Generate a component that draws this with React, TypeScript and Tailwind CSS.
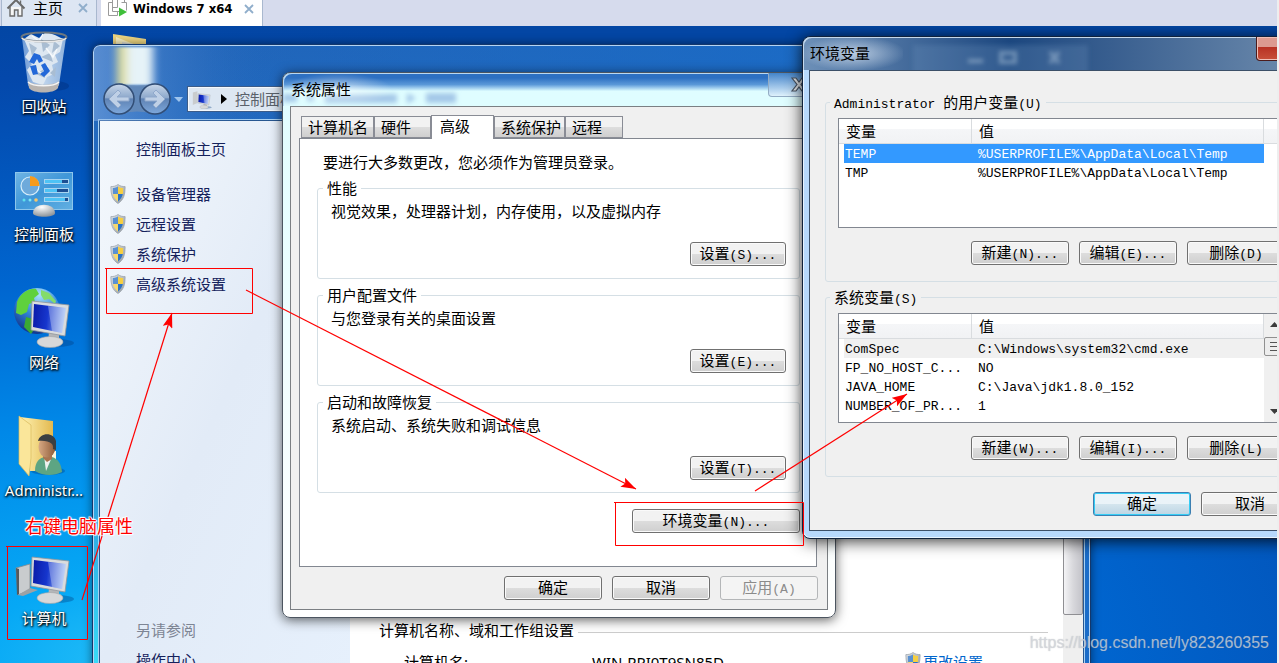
import type { ReactNode } from "react";

const UI = "font-['Noto_Sans','Noto_Sans_CJK_SC',sans-serif]";
const MONO = "font-['Liberation_Mono',monospace] text-[13px]";

const USER_VARS = [
  { name: "TEMP", value: "%USERPROFILE%\\AppData\\Local\\Temp" },
  { name: "TMP", value: "%USERPROFILE%\\AppData\\Local\\Temp" },
];

const SYSTEM_VARS = [
  { name: "ComSpec", value: "C:\\Windows\\system32\\cmd.exe" },
  { name: "FP_NO_HOST_C...", value: "NO" },
  { name: "JAVA_HOME", value: "C:\\Java\\jdk1.8.0_152" },
  { name: "NUMBER_OF_PR...", value: "1" },
];

/* ---------- icons ---------- */

function HomeIcon() {
  return (
    <svg width="20" height="20" viewBox="0 0 20 20" fill="none" stroke="#6a6a6a" strokeWidth="1.4">
      <path d="M4 9v9h4.500v-6h3.500v6H16V9" fill="#f6f6f6" />
      <path d="M1.500 10.500 10 2l8.500 8.500" strokeWidth="2" />
      <path d="M14.500 2.500v4" />
    </svg>
  );
}

function VmIcon() {
  return (
    <svg width="22" height="22" viewBox="0 0 22 22" fill="none" stroke="#9a9a9a" strokeWidth="1">
      <path d="M5.500 0v13.500h7M5.500 4.500h-4v13h9v-4M10.500 0v9.500h-5M17.500 0v4.500h-3" />
      <path d="M19.500 4.500v8M19.500 4.500H15" />
      <path d="M12 9.500v9l8-4.500z" fill="#3fbf3a" stroke="none" />
    </svg>
  );
}

function CloseMark() {
  return (
    <svg width="10" height="10" viewBox="0 0 10 10" stroke="#90aecb" strokeWidth="1.800">
      <path d="M1 1l8 8M9 1 1 9" />
    </svg>
  );
}

function Shield() {
  return (
    <svg width="16" height="20" viewBox="0 0 18 20" preserveAspectRatio="none" className="shrink-0">
      <defs>
        <clipPath id="shieldInner">
          <path d="M9 2.500c2 1.200 4 1.500 6 1.500 0 6-1 10-6 13.500C4 14 3 10 3 4c2 0 4-.3 6-1.500z" />
        </clipPath>
        <linearGradient id="shieldRim" x2="1" y2="1">
          <stop stopColor="#dfe3e8" />
          <stop offset="1" stopColor="#8f979f" />
        </linearGradient>
      </defs>
      <path d="M9 .5C11.500 2.200 14 2.600 17 2.600 17 10.500 15.500 16 9 19.500 2.500 16 1 10.500 1 2.600 4 2.600 6.500 2.200 9 .5z" fill="url(#shieldRim)" stroke="#9aa2aa" strokeWidth=".8" />
      <g clipPath="url(#shieldInner)">
        <path d="M0 0h9v10H0z" fill="#2c72c4" />
        <path d="M9 0h9v10H9z" fill="#f6cf42" />
        <path d="M0 10h9v10H0z" fill="#f6cf42" />
        <path d="M9 10h9v10H9z" fill="#2c72c4" />
        <path d="M0 0h9v20H0z" fill="#fff" opacity=".22" />
      </g>
    </svg>
  );
}

function BinIcon() {
  return (
    <svg width="64" height="64" viewBox="0 0 64 64">
      <defs>
        <linearGradient id="bin" x1="0" x2="1">
          <stop offset="0" stopColor="#6d9ad6" />
          <stop offset=".5" stopColor="#bdd3ec" />
          <stop offset="1" stopColor="#8fb2dc" />
        </linearGradient>
      </defs>
      <ellipse cx="42" cy="56" rx="15" ry="5" fill="#002c78" opacity=".4" />
      <path d="M10 8l6 47c2 6 28 6 31 0l7-47z" fill="url(#bin)" />
      <path d="M12 9l7-5 8 4 7-6 9 3 8 4-3 13-5 3 3 7-6 3 2 9-7 3-4 8-10-3-6-12 5-6-7-7 4-6z" fill="#dde7f1" />
      <path d="M17 13l8 5-5 8zM29 9l9 6-7 7zM42 11l6 5-8 7zM29 27l9-4 3 9zM24 44l8-5 1 9zM38 43l6-6-1 10z" fill="#a9bdd2" />
      <path d="M20 6l7 5 4-7M34 18l7 9 4-8M24 39l6 5 6-8" fill="none" stroke="#f6f9fc" strokeWidth="1.500" />
      <path d="M17 32l5-9 6 2 3 6-4 2-2-4-3 5zM18 36l6-1 2 9-5 1zM29 35l4-2 5 8-6 6-4-3 4-3z" fill="#2368d8" />
      <path d="M16 51c5 5 26 5 31 0l-1 7c-4 6-25 6-29 0z" fill="#b9b4b0" />
      <path d="M16 52c5 5 26 5 31 0" fill="none" stroke="#f4f4f4" strokeWidth="1.500" />
      <ellipse cx="32" cy="7" rx="22.500" ry="4.500" fill="none" stroke="#6e7880" strokeWidth="2" />
      <path d="M10 8c2 5 42 5 44 0" fill="none" stroke="#e8e8e8" strokeWidth="1.500" />
    </svg>
  );
}

function ControlPanelIcon() {
  return (
    <svg width="64" height="64" viewBox="0 0 64 64">
      <defs>
        <linearGradient id="cp" x1="0" y1="0" x2="1" y2="1">
          <stop offset="0" stopColor="#6fb4e4" />
          <stop offset=".5" stopColor="#3f97d8" />
          <stop offset="1" stopColor="#62b0e2" />
        </linearGradient>
        <radialGradient id="cpBase" cx=".4" cy=".2" r=".8">
          <stop offset="0" stopColor="#fff" />
          <stop offset="1" stopColor="#8d949a" />
        </radialGradient>
      </defs>
      <rect x="3.500" y="14.500" width="57" height="37" fill="url(#cp)" stroke="#8cc6ec" />
      <circle cx="18" cy="28" r="9" fill="#6eaadb" stroke="#d8eefb" strokeWidth="1.200" />
      <path d="M18 18v10h9.500A9.500 9.500 0 0 0 18 18z" fill="#f59b1d" />
      <g fill="#1c4f94" stroke="#a8d4f0">
        <rect x="32.500" y="21.500" width="24" height="4" />
        <rect x="32.500" y="30.500" width="24" height="4" />
        <rect x="32.500" y="39.500" width="24" height="4" />
      </g>
      <path d="M33 22h17v3H33zM33 31h12v3H33zM33 40h20v3H33z" fill="#4ec3f5" />
      <circle cx="12" cy="42" r="1.500" fill="#5fe0ec" />
      <circle cx="18" cy="42" r="1.500" fill="#7de8f5" />
      <circle cx="24" cy="42" r="1.800" fill="#f6c66c" />
      <path d="M21 55c0-11 22-11 22 0 0 5-22 5-22 0z" fill="url(#cpBase)" />
    </svg>
  );
}

function Monitor() {
  return (
    <g>
      <ellipse cx="44" cy="57" rx="18" ry="4" fill="#00397a" opacity=".35" />
      <path d="M37 46l10 2v8H36z" fill="#b4b6b8" />
      <ellipse cx="38" cy="56" rx="13" ry="5.500" fill="#d7d8d9" stroke="#a2a4a6" strokeWidth=".6" />
      <path d="M20 15l37 4-4 31-34-6z" fill="#dadcdd" stroke="#92969a" strokeWidth=".8" />
      <path d="M22 18l32 4-4 25-29-6z" fill="url(#screen)" />
      <path d="M36 20l18 2-4 25-10-2z" fill="#fff" opacity=".3" />
    </g>
  );
}

function ScreenDefs() {
  return (
    <defs>
      <linearGradient id="screen" x1="0" y1=".2" x2="1" y2=".3">
        <stop offset="0" stopColor="#0a1ba8" />
        <stop offset=".45" stopColor="#1636cd" />
        <stop offset="1" stopColor="#a8c4f4" />
      </linearGradient>
      <radialGradient id="globe" cx=".55" cy=".15" r=".9">
        <stop offset="0" stopColor="#a9e2fa" />
        <stop offset=".5" stopColor="#3284d8" />
        <stop offset="1" stopColor="#0e2b83" />
      </radialGradient>
    </defs>
  );
}

function NetworkIcon() {
  return (
    <svg width="64" height="64" viewBox="0 0 64 64">
      <ScreenDefs />
      <circle cx="25" cy="25" r="23" fill="url(#globe)" />
      <path d="M5 16C9 6 18 2 24 3l3 5-5 4 1 4-6 2-2 8-6 3-5-2z" fill="#5fd13c" />
      <path d="M29 4l8 3 7 8-1 3-6-5-5 1-3-5z" fill="#84dc6a" />
      <path d="M14 31l7 2 3 8-5 7-7-7z" fill="#3aa834" />
      <Monitor />
    </svg>
  );
}

function ComputerIcon() {
  return (
    <svg width="64" height="64" viewBox="0 0 64 64">
      <ScreenDefs />
      <path d="M4 26l14-4v26L6 53z" fill="#c9ccce" stroke="#85898c" strokeWidth=".8" />
      <path d="M4 26l3 1v25l-2 1z" fill="#55595c" />
      <path d="M18 46l8 2-15 6-5-1z" fill="#9da1a4" />
      <Monitor />
    </svg>
  );
}

function UserFolderIcon() {
  return (
    <svg width="64" height="64" viewBox="0 0 64 64">
      <defs>
        <linearGradient id="folder" x1="0" x2="1">
          <stop offset="0" stopColor="#fff3b4" />
          <stop offset="1" stopColor="#e3b94f" />
        </linearGradient>
        <linearGradient id="face" x1="0" x2="1">
          <stop offset="0" stopColor="#d8aa84" />
          <stop offset="1" stopColor="#8d5a38" />
        </linearGradient>
      </defs>
      <ellipse cx="36" cy="57" rx="17" ry="4" fill="#00397a" opacity=".35" />
      <path d="M8 3l33 4v50H18z" fill="url(#folder)" />
      <path d="M40 37h4v14h-4z" fill="#fbf7df" />
      <path d="M7 2l12 9v33l-2 18L7 50z" fill="#fae69a" stroke="#d9b95a" strokeWidth=".7" />
      <path d="M23 57c0-9 4-13 10-14h7c6 2 9 6 10 15-8 4-19 4-27-1z" fill="#5da583" />
      <path d="M32 42l2 15 6-14z" fill="#eef1ef" />
      <path d="M31 38h9v7l-5 3-4-4z" fill="#a87450" />
      <ellipse cx="35" cy="33" rx="8.500" ry="10.500" fill="url(#face)" />
      <path d="M26 27c2-9 16-9 18 0v9l-3-1c1-5-3-9-15-8z" fill="#3b3f42" />
    </svg>
  );
}

/* ---------- shared controls ---------- */

function Mono({ children }: { children: ReactNode }) {
  return <span className={`leading-none ${MONO}`}>{children}</span>;
}

function Button({ label, hotkey, className = "w-[98px]", disabled, primary }: {
  label: string;
  hotkey?: string;
  className?: string;
  disabled?: boolean;
  primary?: boolean;
}) {
  const look = disabled
    ? "border-[#b4b6b8] bg-[#f4f4f4] text-[#8b8b8b]"
    : primary
      ? "border-[#3c7fb1] bg-linear-to-b from-[#eaf3f8] from-50% via-[#d4e5ee] via-50% to-[#bcd5e4] text-black shadow-[inset_0_0_0_1px_#35cdf5]"
      : "border-[#707070] bg-linear-to-b from-[#f2f2f2] from-50% via-[#dddddd] via-50% to-[#cfcfcf] text-black shadow-[inset_0_0_0_1px_#fafafa]";
  return (
    <button
      type="button"
      disabled={disabled}
      className={`flex h-6 shrink-0 items-baseline justify-center whitespace-nowrap rounded-[3px] border text-[15px] leading-5 ${look} ${className}`}
    >
      {label}
      {hotkey && <Mono>{hotkey}</Mono>}
    </button>
  );
}

function SettingsGroup({ title, text, hotkey }: { title: string; text: string; hotkey: string }) {
  return (
    <fieldset className="rounded-[3px] border border-[#d5dfe5] px-[13px] pb-3 pt-[5px]">
      <legend className="-ml-2 px-1 leading-4">{title}</legend>
      <p>{text}</p>
      <div className="mt-[21px] flex justify-end">
        <Button label="设置" hotkey={hotkey} className="w-[96px]" />
      </div>
    </fieldset>
  );
}

function Tab({ children, active, className }: { children: ReactNode; active?: boolean; className: string }) {
  return (
    <button
      type="button"
      role="tab"
      aria-selected={!!active}
      className={`flex border border-[#898c95] text-left leading-5 ${
        active
          ? "h-6 border-b-0 bg-white pl-2"
          : "h-[22px] bg-linear-to-b from-[#f2f2f2] from-50% via-[#dedede] via-50% to-[#cfcfcf] pl-1.5"
      } ${className}`}
    >
      {children}
    </button>
  );
}

/* ---------- desktop ---------- */

function DesktopIcon({ label, children }: { label: string; children: ReactNode }) {
  return (
    <a href="#" className="flex h-32 flex-col items-center pt-1 text-white">
      {children}
      <span className="whitespace-nowrap text-[15px] leading-6 [text-shadow:1px_1px_2px_#000,0_1px_3px_#000]">{label}</span>
    </a>
  );
}

function TabBar() {
  return (
    <header className="flex h-[26px] shrink-0 gap-1 bg-[#d6dbed] pl-px text-black">
      <div className="flex w-24 items-center gap-[7px] border-x border-[#a9b8cf] bg-[#dde6f3] pb-[10px] pl-1 pr-2">
        <HomeIcon />
        <span className="text-[15px] leading-5">主页</span>
        <button type="button" aria-label="关闭主页" className="ml-auto"><CloseMark /></button>
      </div>
      <div className="flex w-[162px] items-center gap-1 border-r border-[#a9b8cf] bg-white pb-2 pl-[6px] pr-2">
        <VmIcon />
        <span className="whitespace-nowrap font-['DejaVu_Sans_Condensed','DejaVu_Sans',sans-serif] text-[13px] font-bold leading-5">
          Windows 7 x64
        </span>
        <button type="button" aria-label="关闭 Windows 7 x64" className="ml-auto"><CloseMark /></button>
      </div>
    </header>
  );
}

function SystemWindow() {
  const links = ["设备管理器", "远程设置", "系统保护", "高级系统设置"];
  return (
    <section className="absolute -bottom-2 left-[92px] top-[18px] flex w-[999px] flex-col overflow-hidden rounded-t-lg border border-[#14386c] bg-[linear-gradient(90deg,transparent_10%,#1a6cc8_90%),linear-gradient(#2165b9,#2674cc_50%,#38dcf8)] px-[6px] shadow-[inset_0_0_0_1px_#b4d4f4,0_0_10px_#00000080]">
      {/* folder icon seen through the glass */}
      <svg className="absolute left-0 top-0" width="180" height="76">
        <defs>
          <filter id="glass" x="-50%" width="200%"><feGaussianBlur stdDeviation="4 1" /></filter>
          <linearGradient id="capGlow"><stop stopColor="#8fb4e8" stopOpacity=".5" /><stop offset="1" stopColor="#2165b9" stopOpacity="0" /></linearGradient>
        </defs>
        <path d="M1 1h180v75H1z" fill="url(#capGlow)" />
        <g filter="url(#glass)">
          <path d="M24 2h13v38H24z" fill="#dedd9d" />
          <path d="M34 2h26v38H34z" fill="#e6f3f8" />
        </g>
      </svg>
      <div className="relative flex h-[75px] shrink-0 items-end gap-[3px] pb-1 pl-[3px]">
        <svg width="82" height="34" viewBox="0 0 82 34" className="shrink-0">
          <defs>
            <linearGradient id="orb" x2="0" y2="1">
              <stop offset="0" stopColor="#c8d7e9" />
              <stop offset=".45" stopColor="#8ea9cc" />
              <stop offset=".5" stopColor="#5f83b4" />
              <stop offset="1" stopColor="#7ea8dc" />
            </linearGradient>
          </defs>
          <path d="M17 1q18 5 36 0v31q-18-5-36 0z" fill="#6f8db2" opacity=".7" />
          <circle cx="17" cy="17" r="15" fill="url(#orb)" stroke="#324e76" strokeWidth="1.500" />
          <circle cx="53" cy="17" r="15" fill="url(#orb)" stroke="#324e76" strokeWidth="1.500" />
          <path d="M7 17l9-9 3 3-4 4h12v4H15l4 4-3 3z" fill="#bfd0e6" stroke="#90a9cc" />
          <path d="M63 17l-9-9-3 3 4 4H43v4h12l-4 4 3 3z" fill="#bfd0e6" stroke="#90a9cc" />
          <path d="M72 15h9l-4 5z" fill="#9fc5ee" />
        </svg>
        <div className="mb-1 flex h-[26px] flex-1 items-center gap-2 border border-[#3c5c88] bg-[#dde7f2] pl-1 text-[15px] text-[#5b626b] shadow-[inset_0_0_0_1px_#f4f8fc]">
          <svg width="20" height="19" viewBox="2 4 60 58"><ScreenDefs /><path d="M4 12l14-4v36L4 50z" fill="#c9ccce" /><Monitor /></svg>
          <svg width="7" height="10"><path d="M1 0v10l6-5z" /></svg>
          <span>控制面板</span>
        </div>
      </div>
      <div className="flex min-h-0 flex-1 border border-[#27568f] bg-white shadow-[0_0_0_1px_#a9d2f3]">
        <nav className="flex w-[250px] shrink-0 flex-col bg-linear-to-br from-[#f4f8fc] via-[#e2ebf7] to-[#e6f0fc] pl-[10px] pt-[13px] text-[15px] leading-[30px] text-[#15225c]">
          <a href="#" className="pl-[26px]">控制面板主页</a>
          <ul className="mt-[15px]">
            {links.map((link) => (
              <li key={link}>
                <a href="#" className="flex items-center gap-[10px]"><Shield />{link}</a>
              </li>
            ))}
          </ul>
          <div className="-mb-1.5 mt-auto flex flex-col pl-[26px]">
            <span className="text-[#7d8594]">另请参阅</span>
            <a href="#">操作中心</a>
          </div>
        </nav>
        <div className="-mb-2 flex min-w-0 flex-1 flex-col justify-end gap-0.5 pl-[29px] pr-[15px] text-[15px] leading-[30px] text-black">
          <div className="flex items-center gap-1">
            <h2>计算机名称、域和工作组设置</h2>
            <span className="mt-1 h-px flex-1 bg-[#cccccc]" />
          </div>
          <div className="flex pl-[25px]">
            <span className="w-[188px]">计算机名:</span>
            <span className="w-[313px]">WIN-RPI0T9SN85D</span>
            <a href="#" className="flex items-center gap-0.5 text-[#0066cc]"><Shield />更改设置</a>
          </div>
        </div>
        <div className="w-5 shrink-0 bg-[#efefef] pb-[54px]">
          <div className="h-full rounded-[2px] border border-[#8f8f93] bg-linear-to-r from-[#f4f4f6] via-[#d8d8dc] to-[#c4c4ca]" />
        </div>
      </div>
    </section>
  );
}

function PropertiesDialog() {
  return (
    <section className="absolute left-[282px] top-[46px] w-[554px] overflow-hidden rounded-lg border border-[#4c5560] bg-linear-to-b from-[#dffdff] to-white px-[7px] pb-[7px] text-[15px] leading-5 text-black shadow-[0_2px_12px_#000000a0]">
      <div className="relative -mx-[7px] flex h-[33px] justify-between rounded-t-lg bg-linear-to-b from-[#2d70c2] from-15% via-[#5a98d8] via-35% to-[#dffdff] to-55% shadow-[inset_1px_1px_0_#b9d8f2]">
        {/* address bar text seen through the glass */}
        <svg className="absolute inset-0 h-full w-full" aria-hidden="true">
          <defs><filter id="soft" x="-10%" width="120%" y="-100%" height="300%"><feGaussianBlur stdDeviation="2.500" /></filter></defs>
          <path d="M0 21h14v8H0zM24 22h7v6h-7zM42 21h72v9H42zM124 20l9 5-9 6zM143 20h30v10h-30z" filter="url(#soft)" fill="#a4c8e8" />
        </svg>
        <h1 className="relative w-[110px] bg-radial from-[#ffffff90] to-transparent to-70% pl-2 pt-1.5">系统属性</h1>
        <button type="button" aria-label="关闭" className="relative mr-[11px] flex h-6 w-[56px] items-center rounded-b border border-t-0 border-[#93acc4] bg-linear-to-b from-[#4384c9] to-[#dff2fc] pl-[22px]">
          <svg width="16" height="15" viewBox="0 0 16 15"><path d="M1 1h4l3 4 3-4h4l-5 6.500L15 14h-4L8 10l-3 4H1l5-6.500z" fill="#e3e6ea" stroke="#4a5563" strokeWidth="1.200" /></svg>
        </button>
      </div>
      <div className="border border-[#7b7f83] bg-[#f0f0f0] pb-[9px] pl-2 pr-[10px] pt-[7px]">
        <div role="tablist" className="flex h-6 items-end pl-[2px]">
          <Tab className="w-[73px]">计算机名</Tab>
          <Tab className="w-[57px]">硬件</Tab>
          <Tab className="z-10 -mb-px w-[63px]" active>高级</Tab>
          <Tab className="w-[71px]">系统保护</Tab>
          <Tab className="w-[58px]">远程</Tab>
        </div>
        <div className="flex flex-col gap-2 border border-[#828790] bg-white pb-[33px] pl-[17px] pr-4 pt-[13px]">
          <p className="pl-1.5">要进行大多数更改，您必须作为管理员登录。</p>
          <SettingsGroup title="性能" text="视觉效果，处理器计划，内存使用，以及虚拟内存" hotkey="(S)..." />
          <SettingsGroup title="用户配置文件" text="与您登录有关的桌面设置" hotkey="(E)..." />
          <SettingsGroup title="启动和故障恢复" text="系统启动、系统失败和调试信息" hotkey="(T)..." />
          <div className="mt-2 flex justify-end">
            <Button label="环境变量" hotkey="(N)..." className="w-[168px]" />
          </div>
        </div>
        <div className="-mr-px mt-[9px] flex justify-end gap-[10px]">
          <Button label="确定" />
          <Button label="取消" />
          <Button label="应用" hotkey="(A)" disabled />
        </div>
      </div>
    </section>
  );
}

function VariableTable({ rows, highlight, scroll }: {
  rows: { name: string; value: string }[];
  highlight: string;
  scroll?: boolean;
}) {
  const head = "border-b border-r border-[#d9dcdf] bg-linear-to-b from-white from-40% via-[#f5f6f8] via-40% to-[#f1f2f4] p-0 pl-[7px] text-left text-[15px] font-normal";
  return (
    <div className="flex h-[110px] overflow-hidden border border-[#828790] bg-white">
      <div className="min-w-0 flex-1">
        <table className="w-full table-fixed border-separate border-spacing-0">
          <thead>
            <tr className="h-[25px]">
              <th className={`w-[133px] ${head}`}>变量</th>
              <th className={`w-[292px] ${head}`}>值</th>
              {!scroll && <th className={head} aria-label="空列" />}
            </tr>
          </thead>
          <tbody className={`leading-4 ${MONO}`}>
            {rows.map((row, i) => {
              const tone = i === 0 ? highlight : "";
              return (
                <tr key={row.name}>
                  <td className={`border-l-[5px] border-transparent bg-clip-padding p-0 pl-px pt-[3px] ${tone}`}>{row.name}</td>
                  <td className={`p-0 pl-1.5 pt-[3px] ${tone}`}>{row.value}</td>
                  {!scroll && <td className="p-0" />}
                </tr>
              );
            })}
          </tbody>
        </table>
      </div>
      {scroll && (
        <div className="flex w-5 shrink-0 flex-col items-center bg-[#f0f0f0] py-2">
          <svg width="9" height="5"><path d="M0 5 4.500 0 9 5z" fill="#3c3c3c" /></svg>
          <span className="mt-[10px] flex h-[19px] w-full flex-col items-center justify-center gap-[3px] rounded-[2px] border border-[#909090] bg-[#ededed]">
            <i className="h-px w-2 bg-[#555555]" />
            <i className="h-px w-2 bg-[#555555]" />
            <i className="h-px w-2 bg-[#555555]" />
          </span>
          <svg width="9" height="5" className="mt-auto"><path d="M0 0 4.500 5 9 0z" fill="#3c3c3c" /></svg>
        </div>
      )}
    </div>
  );
}

function VariableGroup({ title, keys, children }: { title: ReactNode; keys: string[]; children: ReactNode }) {
  return (
    <fieldset className="min-w-0 rounded-[3px] border border-[#d5dfe5] pb-4 pl-3 pr-[13px] pt-2">
      <legend className="-ml-2 h-4 whitespace-pre px-1 leading-4">{title}</legend>
      {children}
      <div className="mt-[13px] flex justify-end gap-[10px]">
        <Button label="新建" hotkey={keys[0]} />
        <Button label="编辑" hotkey={keys[1]} />
        <Button label="删除" hotkey={keys[2]} />
      </div>
    </fieldset>
  );
}

function EnvironmentDialog() {
  return (
    <section className="absolute left-[802px] top-[10px] w-[520px] overflow-hidden rounded-lg border border-[#10223c] bg-[#b7d9fc] pb-[7px] pl-[6px] pr-[7px] text-[15px] leading-5 text-black shadow-[inset_0_0_0_1px_#e8f4ff,0_2px_16px_#000000d0]">
      <div className="-ml-[6px] -mr-[7px] flex h-[33px] justify-between rounded-t-lg bg-linear-to-r from-[#6d90b8] via-[#1c477f] via-40% to-[#7390b0] shadow-[inset_1px_1px_0_#c4d8ec]">
        <h1 className="w-[100px] bg-radial from-[#c6d6e8e0] to-transparent to-75% pl-[7px] pt-1.5">环境变量</h1>
        <svg className="h-[33px] flex-1" aria-hidden="true">
          <defs><filter id="soft2"><feGaussianBlur stdDeviation="2" /></filter></defs>
          <g filter="url(#soft2)">
            <path d="M10 8h175v30H10z" fill="#6c92bf" opacity=".25" />
            <g opacity=".45">
              <path d="M65 22h15v4H65z" fill="#b7cbe0" />
              <path d="M98 16h14v9H98z" fill="none" stroke="#b7cbe0" strokeWidth="4" />
              <path d="M147 15l9 11M156 15l-9 11" stroke="#b7cbe0" strokeWidth="4" />
            </g>
          </g>
        </svg>
        <button type="button" aria-label="关闭" className="mr-[9px] h-6 w-[56px] rounded-b border border-t-0 border-[#4c1c1c] bg-linear-to-b from-[#dc9a90] from-45% via-[#b83224] via-45% to-[#c8503a] shadow-[inset_0_0_0_1px_#f0c0b8]" />
      </div>
      <div className="flex flex-col border border-[#3c5068] bg-[#f0f0f0] pb-[14px] pl-[15px] pr-[14px] pt-[23px]">
        <VariableGroup title={<><Mono>Administrator </Mono>的用户变量<Mono>(U)</Mono></>} keys={["(N)...", "(E)...", "(D)"]}>
          <VariableTable rows={USER_VARS} highlight="bg-[#3399ff] text-white" />
        </VariableGroup>
        <div className="h-[7px]" />
        <VariableGroup title={<>系统变量<Mono>(S)</Mono></>} keys={["(W)...", "(I)...", "(L)"]}>
          <VariableTable rows={SYSTEM_VARS} highlight="bg-[#f0f0f0]" scroll />
        </VariableGroup>
        <div className="mt-[15px] flex justify-end gap-[10px]">
          <Button label="确定" primary />
          <Button label="取消" />
        </div>
      </div>
    </section>
  );
}

/* Red boxes and arrows that walk through the steps */
function Annotations() {
  return (
    <svg className="pointer-events-none absolute inset-0 h-full w-full" fill="none" stroke="#ff0000">
      <defs>
        <marker id="arrow" markerUnits="userSpaceOnUse" markerWidth="16" markerHeight="10" refX="15" refY="5" orient="auto">
          <path d="M0 0l15 5-15 5 3-5z" fill="#ff0000" stroke="none" />
        </marker>
      </defs>
      <path d="M105 268.500h147.500v45h-146v-45M6 546.500h81.500v93h-80v-93M614 502.500h189.500v43h-188v-43" />
      <g strokeWidth="1.200">
        <path d="M82 600 172 313" markerEnd="url(#arrow)" />
        <path d="M246 290 636 489" markerEnd="url(#arrow)" />
        <path d="M755 491 907 394" markerEnd="url(#arrow)" />
      </g>
    </svg>
  );
}

export default function App() {
  return (
    <div className={`relative flex h-screen flex-col overflow-hidden bg-[#eeeeee] pr-0.5 ${UI}`}>
      <TabBar />
      <main className="relative min-h-0 flex-1 overflow-hidden bg-[radial-gradient(1500px_640px_at_180px_100%,#2cc4f8_0%,#06a8f5_14%,#0088e8_38%,#0066d0_60%,#0448ab_92%,#0346a4_100%)]">
        <svg className="absolute left-[112px] top-[8px]" width="38" height="20" aria-hidden="true">
          <path d="M1 0l33 5v15H1z" fill="#ecd481" />
          <path d="M4 3l20 8v9H4z" fill="#f8efc0" />
          <path d="M10 8l18 3v9H10z" fill="#dcdcd4" />
        </svg>
        <nav className="flex w-[88px] flex-col" aria-label="桌面">
          <DesktopIcon label="回收站"><BinIcon /></DesktopIcon>
          <DesktopIcon label="控制面板"><ControlPanelIcon /></DesktopIcon>
          <DesktopIcon label="网络"><NetworkIcon /></DesktopIcon>
          <DesktopIcon label="Administr..."><UserFolderIcon /></DesktopIcon>
          <DesktopIcon label="计算机"><ComputerIcon /></DesktopIcon>
        </nav>
        <SystemWindow />
        <PropertiesDialog />
        <EnvironmentDialog />
      </main>
      <Annotations />
      <span className="absolute left-[25px] top-[513px] font-['Noto_Sans_CJK_SC',sans-serif] text-[18px] leading-6 text-[#ff0000] [text-shadow:1px_0_1px_#fff,-1px_0_1px_#fff,0_1px_1px_#fff,0_-1px_1px_#fff,1px_1px_1px_#fff,-1px_-1px_1px_#fff]">
        右键电脑属性
      </span>
      <span className="absolute bottom-2 right-[10px] font-['Liberation_Sans',sans-serif] text-[16px] leading-6 text-[#d8dce4b0] [text-shadow:0_0_1px_#8888]">
        https://blog.csdn.net/ly823260355
      </span>
    </div>
  );
}
